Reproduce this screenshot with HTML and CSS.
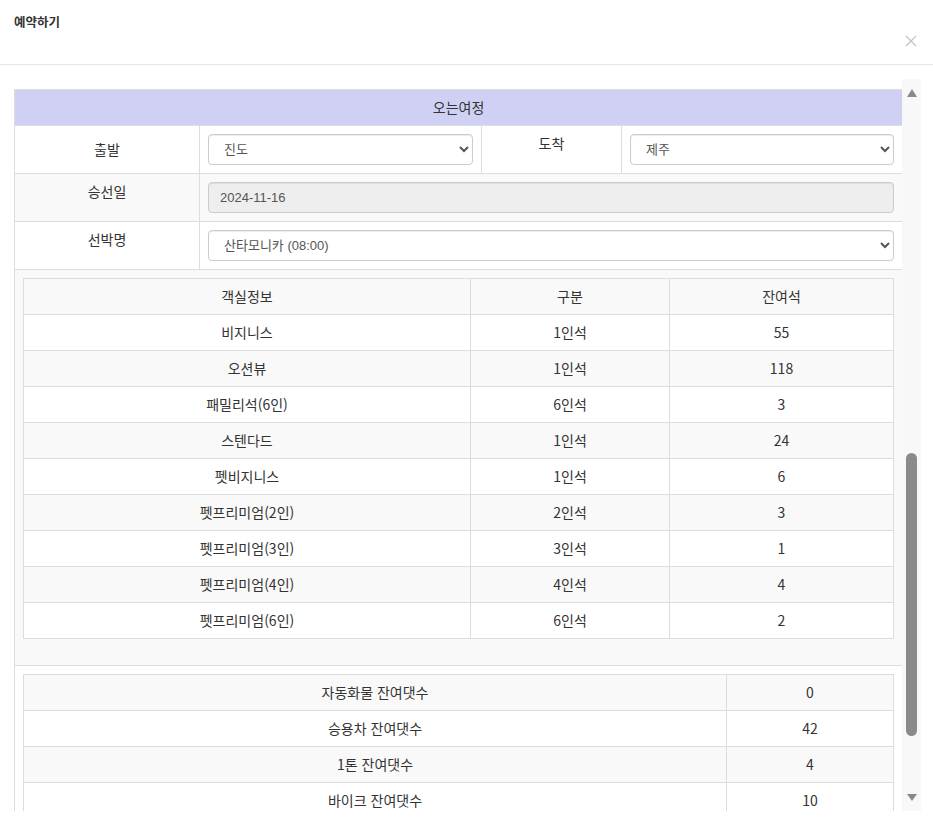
FILE: index.html
```html
<!DOCTYPE html>
<html lang="ko">
<head>
<meta charset="utf-8">
<title>예약하기</title>
<link rel="stylesheet" href="styles.css">
</head>
<body>
<div class="modal">
  <div class="modal-header">
    <h4 class="modal-title">예약하기</h4>
    <button class="close" type="button" aria-label="닫기">
      <svg width="12" height="12" viewBox="0 0 12 12"><path d="M1 1 L11 11 M11 1 L1 11" stroke="#c4c4c4" stroke-width="1.3" fill="none"/></svg>
    </button>
  </div>
  <div class="modal-body">
    <div class="scroll">
      <table class="trip">
        <colgroup><col class="c1"><col class="c2"><col class="c3"><col class="c4"></colgroup>
        <tr class="title"><th colspan="4">오는여정</th></tr>
        <tr class="form-row">
          <th class="mid">출발</th>
          <td><select class="form-control"><option>진도</option></select></td>
          <th>도착</th>
          <td><select class="form-control"><option>제주</option></select></td>
        </tr>
        <tr class="form-row alt">
          <th>승선일</th>
          <td colspan="3"><input class="form-control" type="text" value="2024-11-16" disabled></td>
        </tr>
        <tr class="form-row">
          <th>선박명</th>
          <td colspan="3"><select class="form-control"><option>산타모니카 (08:00)</option></select></td>
        </tr>
        <tr class="alt">
          <td colspan="4" class="nest">
            <table class="grid rooms">
              <colgroup><col class="r1"><col class="r2"><col class="r3"></colgroup>
              <tr><td>객실정보</td><td>구분</td><td>잔여석</td></tr>
              <tr><td>비지니스</td><td>1인석</td><td>55</td></tr>
              <tr><td>오션뷰</td><td>1인석</td><td>118</td></tr>
              <tr><td>패밀리석(6인)</td><td>6인석</td><td>3</td></tr>
              <tr><td>스텐다드</td><td>1인석</td><td>24</td></tr>
              <tr><td>펫비지니스</td><td>1인석</td><td>6</td></tr>
              <tr><td>펫프리미엄(2인)</td><td>2인석</td><td>3</td></tr>
              <tr><td>펫프리미엄(3인)</td><td>3인석</td><td>1</td></tr>
              <tr><td>펫프리미엄(4인)</td><td>4인석</td><td>4</td></tr>
              <tr><td>펫프리미엄(6인)</td><td>6인석</td><td>2</td></tr>
            </table>
          </td>
        </tr>
        <tr>
          <td colspan="4" class="nest">
            <table class="grid cars">
              <colgroup><col class="v1"><col class="v2"></colgroup>
              <tr><td>자동화물 잔여댓수</td><td>0</td></tr>
              <tr><td>승용차 잔여댓수</td><td>42</td></tr>
              <tr><td>1톤 잔여댓수</td><td>4</td></tr>
              <tr><td>바이크 잔여댓수</td><td>10</td></tr>
            </table>
          </td>
        </tr>
      </table>
    </div>
    <div class="scrollbar" aria-hidden="true">
      <span class="arrow up"></span>
      <span class="thumb"></span>
      <span class="fill"></span>
      <span class="arrow down"></span>
    </div>
  </div>
</div>
</body>
</html>
```
FILE: styles.css
```css
html, body {
  margin: 0;
  padding: 0;
  background: #fff;
}
body {
  font-family: "Noto Sans CJK KR", "Liberation Sans", sans-serif;
  font-size: 14px;
  color: #333;
}
.modal {
  width: 933px;
  height: 826px;
  display: flex;
  flex-direction: column;
}
.modal-header {
  height: 65px;
  box-sizing: border-box;
  padding: 12px 16px 0 14px;
  border-bottom: 1px solid #e5e5e5;
  display: flex;
  flex-direction: column;
}
.modal-title {
  margin: 0;
  font-size: 12.5px;
  line-height: 20px;
  font-weight: 700;
  color: #333;
}
.close {
  align-self: flex-end;
  margin-top: 3px;
  padding: 0;
  border: 0;
  background: none;
  width: 12px;
  height: 12px;
  display: block;
}
.close svg { display: block; }
.modal-body {
  padding: 14px 12px 0 14px;
  display: flex;
  align-items: flex-start;
}
.scroll {
  width: 888px;
  height: 732px;
  overflow: hidden;
  padding-top: 10px;
  box-sizing: border-box;
}
.scrollbar {
  width: 19px;
  height: 732px;
  background: #f8f8f8;
  display: flex;
  flex-direction: column;
  align-items: center;
}
.arrow {
  width: 0;
  height: 0;
  border-left: 5.5px solid transparent;
  border-right: 5.5px solid transparent;
}
.arrow.up {
  margin-top: 10px;
  border-bottom: 8px solid #8a8a8a;
}
.arrow.down {
  margin-bottom: 10px;
  border-top: 7px solid #8a8a8a;
}
.thumb {
  margin-top: 356px;
  width: 11px;
  height: 283px;
  border-radius: 6px;
  background: #8a8a8a;
}
.fill { flex: 1; }

table {
  border-collapse: collapse;
  border-spacing: 0;
}
.trip {
  width: 888px;
  table-layout: fixed;
}
.c1 { width: 185px; }
.c2 { width: 282px; }
.c3 { width: 140px; }
.c4 { width: 281px; }
.trip th, .trip td {
  border: 1px solid #ddd;
  padding: 8px;
  line-height: 19px;
  text-align: center;
  vertical-align: top;
  font-weight: 400;
  color: #333;
}
.trip th.mid { vertical-align: middle; }
.trip .title th {
  background: #d0d0f4;
  padding: 8px;
}
.trip .alt > th, .trip .alt > td { background: #f9f9f9; }
.trip td.nest { padding: 8px; }

.form-control {
  display: block;
  width: 100%;
  height: 31px;
  box-sizing: border-box;
  padding: 0 11px;
  font-family: "Liberation Sans", "Noto Sans CJK KR", sans-serif;
  font-size: 13px;
  color: #555;
  background: #fff;
  border: 1px solid #ccc;
  border-radius: 4px;
  box-shadow: inset 0 1px 1px rgba(0,0,0,.075);
  margin: 0;
}
input.form-control[disabled] {
  background: #eee;
  color: #555;
  -webkit-text-fill-color: #555;
  opacity: 1;
}

.grid {
  width: 870px;
  table-layout: fixed;
}
.rooms { margin-bottom: 18px; }
.r1 { width: 447px; }
.r2 { width: 199px; }
.r3 { width: 224px; }
.v1 { width: 703px; }
.v2 { width: 167px; }
.grid td {
  border: 1px solid #ddd;
  padding: 8px;
  line-height: 19px;
  text-align: center;
  vertical-align: top;
  background: #fff;
  color: #333;
}
.trip .alt .grid td { background: #fff; }
.grid tr:nth-child(odd) td,
.trip .alt .grid tr:nth-child(odd) td { background: #f9f9f9; }
```
